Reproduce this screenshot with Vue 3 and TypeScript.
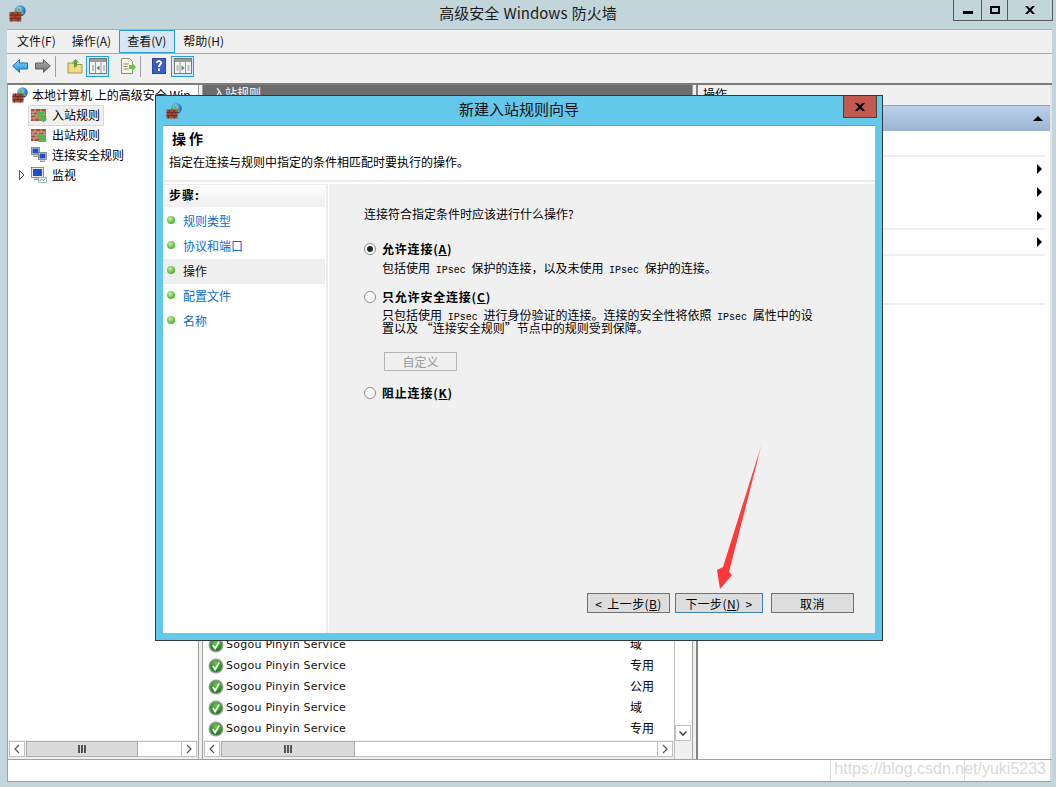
<template>
  <main class="desktop">
    <header class="titlebar">
      <svg class="app-icon" viewBox="0 0 16 16"><use href="#fw" /></svg>
      <span class="title-text">高级安全 Windows 防火墙</span>
      <div class="win-buttons">
        <span class="wb wb-min"><i></i></span>
        <span class="wb wb-max"><i></i></span>
        <span class="wb wb-close">
          <svg viewBox="0 0 10 8" width="10" height="8"><path d="M0 0h2.600l2.400 2.400L7.400 0H10L6.400 4 10 8H7.400L5 5.600 2.600 8H0l3.600-4z" fill="#000" /></svg>
        </span>
      </div>
    </header>

    <svg class="defs" width="0" height="0">
      <defs>
        <radialGradient id="globe" cx="0.4" cy="0.35" r="0.7">
          <stop offset="0" stop-color="#bfe6ff" />
          <stop offset="0.6" stop-color="#2f7fd8" />
          <stop offset="1" stop-color="#1b4fa0" />
        </radialGradient>
        <radialGradient id="okball" cx="0.5" cy="0.3" r="0.75">
          <stop offset="0" stop-color="#66cc44" />
          <stop offset="1" stop-color="#127012" />
        </radialGradient>
        <linearGradient id="blueArrow" x1="0" y1="0" x2="0" y2="1">
          <stop offset="0" stop-color="#8fd4fb" />
          <stop offset="1" stop-color="#1f8fe0" />
        </linearGradient>
        <linearGradient id="greyArrow" x1="0" y1="0" x2="0" y2="1">
          <stop offset="0" stop-color="#b0b0b0" />
          <stop offset="1" stop-color="#6f6f6f" />
        </linearGradient>
        <g id="fw">
          <circle cx="10.500" cy="5.500" r="5.200" fill="url(#globe)" />
          <path d="M8 2.500l3 1-1 2.500-2-.5zM11 7l2.500-.5.500 2-2 .5z" fill="#5bbf3c" />
          <rect x=".5" y="6.500" width="11" height="9" fill="#a24a36" />
          <path d="M.5 9.500h11M.5 12.500h11M3.500 6.500v3M8 6.500v3M6 9.500v3M2.500 12.500v3M8.500 12.500v3" stroke="#6d2d20" fill="none" />
        </g>
        <g id="brick">
          <rect y="2" width="15" height="12" fill="#a8503c" />
          <path d="M0 5h15M0 8h15M0 11h15M4 2v3M10 2v3M2 5v3M7 5v3M13 5v3M5 8v3M11 8v3M3 11v3M9 11v3" stroke="#dcc0b4" stroke-width=".8" fill="none" />
        </g>
        <g id="screen">
          <rect x=".5" y=".5" width="8" height="7" fill="#e8e8e8" stroke="#666" stroke-width=".7" />
          <rect x="1.500" y="1.500" width="6" height="5" fill="#1f4fc8" />
          <path d="M2 8.500h5v1.500H2z" fill="#999" />
        </g>
      </defs>
    </svg>

    <div class="client">
      <nav class="menubar">
        <span v-for="m in menus" :key="m" class="menu-item" :class="{ active: m === '查看(V)' }">{{ m }}</span>
      </nav>

      <div class="toolbar">
        <svg class="tb-arrow" viewBox="0 0 16 14"><path d="M.7 7L7.500.7V4H15.500v6H7.500v3.300z" fill="url(#blueArrow)" stroke="#1c6fb8" /></svg>
        <svg class="tb-arrow tb-arrow2" viewBox="0 0 16 14"><path d="M15.300 7L8.500.7V4H.5v6h8v3.300z" fill="url(#greyArrow)" stroke="#5e5e5e" /></svg>
        <span class="tb-sep"></span>
        <svg class="tb-icon" viewBox="0 0 16 16">
          <path d="M1 5h5l1 1.500h8V15H1z" fill="#f1dc8c" stroke="#a89150" />
          <path d="M7 10V4.500H5L8.500 1 12 4.500h-2V8z" fill="#58a53a" />
        </svg>
        <span class="tb-toggle">
          <svg viewBox="0 0 18 16" width="18" height="16">
            <rect x=".5" y=".5" width="17" height="15" fill="#f5f5f5" stroke="#777" />
            <path d="M1 1h16v3H1z" fill="#9a9a9a" />
            <path d="M6.500 4v11M12 4v11" stroke="#999" />
            <path d="M3 8h2M3 10h2M3 12h2M14 8h2M14 10h2M14 12h2" stroke="#888" />
            <path d="M10.500 7.500v5L7.500 10z" fill="#33a04a" />
          </svg>
        </span>
        <svg class="tb-icon tb-export" viewBox="0 0 16 16">
          <path d="M1.500.5h8l3 3V15.500h-11z" fill="#f6f3df" stroke="#8d8d8d" />
          <path d="M3.500 6h5M3.500 8.500h4M3.500 11h5" stroke="#8a8a6a" />
          <path d="M9 7h3V4.500L16 9l-4 4.500V11H9z" fill="#6cc24a" />
        </svg>
        <span class="tb-sep tb-sep2"></span>
        <svg class="tb-help" viewBox="0 0 14 16">
          <rect width="14" height="16" fill="#2c46a8" />
          <rect x="1" y="1" width="12" height="14" fill="#3c5cc4" />
          <path d="M4 5c0-2 1.500-3 3-3s3 1 3 3c0 1.800-2 2-2 4H6c0-2.500 2-2.800 2-4 0-.6-.4-1-1-1s-1 .4-1 1zM6 10.500h2V13H6z" fill="#fff" />
        </svg>
        <span class="tb-toggle tb-toggle2">
          <svg viewBox="0 0 18 16" width="18" height="16">
            <rect x=".5" y=".5" width="17" height="15" fill="#f5f5f5" stroke="#777" />
            <path d="M1 1h16v3H1z" fill="#9a9a9a" />
            <path d="M6 4v11M11.500 4v11" stroke="#999" />
            <path d="M2.500 8h2M2.500 10h2M2.500 12h2M13.500 8h2M13.500 10h2M13.500 12h2" stroke="#888" />
            <path d="M7.500 7.500v5l3-2.500z" fill="#33a04a" />
          </svg>
        </span>
      </div>

      <div class="panes">
        <aside class="tree">
          <div class="tree-body">
            <div class="tree-root">
              <svg class="t-icon" viewBox="0 0 16 16"><use href="#fw" /></svg>
              <span class="t-label">本地计算机 上的高级安全 Win</span>
            </div>
            <div v-for="(n, i) in treeNodes" :key="n" class="tree-node">
              <span class="twisty">
                <svg v-if="i === 3" viewBox="0 0 6 10" width="6" height="10"><path d="M.5.5L5 5 .5 9.500z" fill="#fff" stroke="#555" /></svg>
              </span>
              <span class="node-inner" :class="{ selected: i === 0 }">
                <svg class="t-icon" viewBox="0 0 16 16">
                  <template v-if="i === 0">
                    <use href="#brick" />
                    <path d="M6 5h8l-2.500 2.500L16 12l-3.500 3.500L8 11l-2 2z" fill="#55b84a" />
                  </template>
                  <template v-else-if="i === 1">
                    <use href="#brick" />
                    <path d="M15 15H7l2.500-2.500L6 9l3-3 3.500 3.500L15 7z" fill="#55b84a" />
                  </template>
                  <template v-else-if="i === 2">
                    <use href="#screen" />
                    <g transform="translate(7 5)"><use href="#screen" /></g>
                  </template>
                  <template v-else>
                    <rect x=".5" y=".5" width="12" height="10" fill="#e8e8e8" stroke="#666" stroke-width=".7" />
                    <rect x="2" y="2" width="9" height="7" fill="#1f4fc8" />
                    <path d="M3 11.500h7V13H3z" fill="#999" />
                    <rect x="7.500" y="10.500" width="8" height="5" fill="#fff" stroke="#7fa0b0" stroke-width=".7" />
                    <path d="M8.500 14l2-2 1.500 1.500 2.500-2" stroke="#3fa63f" fill="none" />
                  </template>
                </svg>
                <span class="t-label">{{ n }}</span>
              </span>
            </div>
          </div>
          <div class="hscroll">
            <span class="sb-btn"><svg viewBox="0 0 6 10" width="6" height="10"><path d="M5 1L1 5l4 4" stroke="#555" stroke-width="1.200" fill="none" /></svg></span>
            <span class="sb-thumb sb-thumb-a"><b></b></span>
            <span class="sb-track"></span>
            <span class="sb-btn"><svg viewBox="0 0 6 10" width="6" height="10"><path d="M1 1l4 4-4 4" stroke="#555" stroke-width="1.200" fill="none" /></svg></span>
          </div>
        </aside>

        <section class="center">
          <div class="pane-title">入站规则</div>
          <div class="center-main">
            <div class="list-wrap">
              <div class="rows">
                <div v-for="(p, i) in rows" :key="i" class="row">
                  <svg class="ok" viewBox="0 0 16 16">
                    <circle cx="8" cy="8" r="7.500" fill="#9a9a9a" />
                    <circle cx="8" cy="8" r="6" fill="url(#okball)" />
                    <path d="M4.800 8l2.300 3.500L11.200 4.500" stroke="#fff" stroke-width="1.800" fill="none" />
                  </svg>
                  <span class="svc">Sogou Pinyin Service</span>
                  <span class="profile">{{ p }}</span>
                </div>
              </div>
              <div class="hscroll">
                <span class="sb-btn"><svg viewBox="0 0 6 10" width="6" height="10"><path d="M5 1L1 5l4 4" stroke="#555" stroke-width="1.200" fill="none" /></svg></span>
                <span class="sb-thumb sb-thumb-b"><b></b></span>
                <span class="sb-track"></span>
                <span class="sb-btn"><svg viewBox="0 0 6 10" width="6" height="10"><path d="M1 1l4 4-4 4" stroke="#555" stroke-width="1.200" fill="none" /></svg></span>
              </div>
            </div>
            <div class="vscroll">
              <span class="v-track"></span>
              <span class="sb-btn v-btn">
                <svg viewBox="0 0 8 5" width="8" height="5"><path d="M.5 .5L4 4 7.500 .5" stroke="#333" stroke-width="1.300" fill="none" /></svg>
              </span>
              <span class="corner"></span>
            </div>
          </div>
        </section>

        <aside class="actions">
          <div class="pane-title pane-title-light">操作</div>
          <div class="act-head"><span class="tri-up"></span></div>
          <div class="act-rows">
            <div class="act-row act-line"></div>
            <div class="act-row act-short"><span class="tri-right"></span></div>
            <div class="act-row"><span class="tri-right"></span></div>
            <div class="act-row act-line"><span class="tri-right"></span></div>
            <div class="act-row act-line"><span class="tri-right"></span></div>
            <div class="act-row act-tall act-line"></div>
          </div>
        </aside>
      </div>

      <footer class="statusbar">
        <span class="status-main"></span>
        <span class="status-cell"></span>
        <span class="status-end"></span>
      </footer>
    </div>

    <section class="dialog">
      <header class="dlg-title">
        <svg class="dlg-icon" viewBox="0 0 16 16"><use href="#fw" /></svg>
        <span class="dlg-title-text">新建入站规则向导</span>
        <span class="dlg-close">
          <svg viewBox="0 0 10 8" width="10" height="8"><path d="M0 0h2.600l2.400 2.400L7.400 0H10L6.400 4 10 8H7.400L5 5.600 2.600 8H0l3.600-4z" fill="#000" /></svg>
        </span>
      </header>
      <div class="dlg-body">
        <div class="dlg-head">
          <h2>操作</h2>
          <p>指定在连接与规则中指定的条件相匹配时要执行的操作。</p>
        </div>
        <div class="dlg-main">
          <nav class="steps">
            <div class="steps-title">步骤:</div>
            <div v-for="s in steps" :key="s" class="step" :class="{ current: s === '操作' }">
              <span class="dot"></span>
              <span class="step-label">{{ s }}</span>
            </div>
          </nav>
          <div class="content">
            <p class="question">连接符合指定条件时应该进行什么操作?</p>
            <div class="opt">
              <span class="radio on"></span>
              <div>
                <div class="opt-label">允许连接(<u>A</u>)</div>
                <div class="opt-desc">包括使用 <span class="latin">IPsec</span> 保护的连接，以及未使用 <span class="latin">IPsec</span> 保护的连接。</div>
              </div>
            </div>
            <div class="opt opt2">
              <span class="radio"></span>
              <div>
                <div class="opt-label">只允许安全连接(<u>C</u>)</div>
                <div class="opt-desc line1">只包括使用 <span class="latin">IPsec</span> 进行身份验证的连接。连接的安全性将依照 <span class="latin">IPsec</span> 属性中的设</div>
                <div class="opt-desc line2">置以及 “连接安全规则”节点中的规则受到保障。</div>
                <button class="custom" type="button" disabled>自定义</button>
              </div>
            </div>
            <div class="opt opt3">
              <span class="radio"></span>
              <div class="opt-label">阻止连接(<u>K</u>)</div>
            </div>
            <div class="dlg-buttons">
              <button class="btn btn-back" type="button">&lt; 上一步(<u>B</u>)</button>
              <button class="btn btn-next" type="button">下一步(<u>N</u>) &gt;</button>
              <button class="btn btn-cancel" type="button">取消</button>
            </div>
          </div>
        </div>
      </div>
    </section>

    <svg class="red-arrow" viewBox="0 0 60 170" width="60" height="170">
      <defs>
        <linearGradient id="fade" x1="1" y1="0" x2="0" y2="1">
          <stop offset="0" stop-color="#ffd0d0" />
          <stop offset="0.12" stop-color="#ff4040" />
          <stop offset="1" stop-color="#ff3636" />
        </linearGradient>
      </defs>
      <path d="M47 0L14 129 17 132 5 146 2 127 8 124z" fill="url(#fade)" />
    </svg>

    <div class="watermark">https://blog.csdn.net/yuki5233</div>
  </main>
</template>

<script setup lang="ts">
const menus: string[] = ["文件(F)", "操作(A)", "查看(V)", "帮助(H)"];
const treeNodes: string[] = ["入站规则", "出站规则", "连接安全规则", "监视"];
const steps: string[] = ["规则类型", "协议和端口", "操作", "配置文件", "名称"];
const rows: string[] = ["域", "专用", "公用", "域", "专用"];
</script>

<style>
html,
body {
  margin: 0;
  background: #c2d5db;
}
</style>

<style scoped>
.desktop {
  position: relative;
  width: 1056px;
  height: 787px;
  overflow: hidden;
  display: flex;
  flex-direction: column;
  background: #c2d5db;
  color: #000;
  font-family: "Noto Sans CJK SC", "Liberation Sans", sans-serif;
  font-size: 12px;
}

.defs {
  position: absolute;
}

.titlebar {
  position: relative;
  height: 29px;
  flex: none;
  display: flex;
  align-items: center;
  justify-content: center;
}

.app-icon {
  position: absolute;
  left: 9px;
  top: 5px;
  width: 17px;
  height: 17px;
}

.title-text {
  font-size: 15px;
  word-spacing: 1px;
  margin-top: -4px;
  color: #1a1a1a;
}

.win-buttons {
  position: absolute;
  right: 3px;
  top: 0;
  height: 20px;
  display: flex;
  border: 1px solid #55595c;
  border-top: 0;
}

.wb {
  display: flex;
  align-items: center;
  justify-content: center;
  height: 20px;
  border-left: 1px solid #55595c;
}

.wb-min {
  width: 27px;
  border-left: 0;
}

.wb-min i {
  display: block;
  width: 10px;
  height: 3px;
  background: #000;
  margin-top: 5px;
}

.wb-max {
  width: 25px;
}

.wb-max i {
  display: block;
  width: 6px;
  height: 4px;
  border: 2px solid #000;
}

.wb-close {
  width: 44px;
}

.client {
  flex: 1;
  min-height: 0;
  margin: 0 4px 5px 7px;
  display: flex;
  flex-direction: column;
  background: #f0f0f0;
  border-top: 1px solid #a6b4ba;
}

.menubar {
  height: 23px;
  flex: none;
  display: flex;
  align-items: stretch;
  border-bottom: 1px solid #a9a9b4;
  padding-left: 2px;
}

.menu-item {
  padding: 0 7px;
  line-height: 19px;
  border: 1px solid transparent;
  color: #111;
}

.menu-item.active {
  background: #d5e7f8;
  border-color: #26a0da;
  padding-right: 8px;
}

.toolbar {
  height: 29px;
  flex: none;
  box-sizing: border-box;
  display: flex;
  align-items: center;
  padding: 0 0 5px 5px;
}

.tb-arrow {
  width: 16px;
  height: 14px;
  margin-right: 2px;
}

.tb-arrow2 {
  margin-left: 5px;
}

.tb-sep {
  width: 1px;
  height: 21px;
  background: #a0a0a0;
  margin: 0 11px 0 2px;
}

.tb-icon {
  width: 16px;
  height: 16px;
}

.tb-toggle {
  width: 21px;
  height: 19px;
  margin-left: 3px;
  display: flex;
  align-items: center;
  justify-content: center;
  background: #d5e7f8;
  border: 1px solid #26a0da;
}

.tb-export {
  margin-left: 11px;
}

.tb-sep2 {
  margin: 0 11px 0 4px;
}

.tb-help {
  width: 14px;
  height: 16px;
}

.tb-toggle2 {
  margin-left: 5px;
}

.panes {
  flex: 1;
  min-height: 0;
  display: flex;
  border-top: 2px solid #7c7c7c;
  border-bottom: 1px solid #a0a0a0;
  border-left: 1px solid #a0a0a0;
}

.tree {
  width: 191px;
  flex: none;
  box-sizing: border-box;
  display: flex;
  flex-direction: column;
  background: #fff;
  border-right: 1px solid #a0a0a0;
}

.tree-body {
  flex: 1;
  min-height: 0;
  overflow: hidden;
}

.tree-root {
  display: flex;
  align-items: center;
  height: 20px;
  padding-left: 4px;
  gap: 4px;
  white-space: nowrap;
}

.t-label {
  margin-top: -2px;
}

.tree-node {
  display: flex;
  align-items: center;
  height: 20px;
  padding-left: 7px;
}

.twisty {
  width: 13px;
  height: 10px;
  padding-left: 4px;
  box-sizing: border-box;
  flex: none;
  display: flex;
  align-items: center;
}

.twisty svg {
  flex: none;
}

.node-inner {
  display: flex;
  align-items: center;
  gap: 5px;
  height: 19px;
  padding: 0 3px 0 2px;
  margin-left: 1px;
}

.node-inner.selected {
  background: #f0f0f0;
  outline: 1px solid #d9d9d9;
}

.t-icon {
  width: 16px;
  height: 16px;
  flex: none;
}

.hscroll {
  height: 16px;
  flex: none;
  display: flex;
  align-items: stretch;
  padding: 1px 1px 2px;
  background: #f0f0f0;
}

.sb-btn {
  width: 16px;
  flex: none;
  display: flex;
  align-items: center;
  justify-content: center;
  background: #fff;
  border: 1px solid #c0c0c0;
  box-sizing: border-box;
}

.sb-thumb {
  display: flex;
  align-items: center;
  justify-content: center;
  margin-left: 1px;
  background: #dadada;
  border: 1px solid #acacac;
  box-sizing: border-box;
}

.sb-thumb b {
  display: block;
  width: 8px;
  height: 8px;
  background: repeating-linear-gradient(90deg, #555 0 2px, transparent 2px 3px);
}

.sb-thumb-a {
  width: 112px;
}

.sb-thumb-b {
  width: 134px;
}

.sb-track {
  flex: 1;
  background: #fff;
  border-top: 1px solid #c0c0c0;
  border-bottom: 1px solid #c0c0c0;
}

.center {
  width: 491px;
  margin: 0 3px;
  flex: none;
  display: flex;
  flex-direction: column;
  background: #fff;
  border-left: 1px solid #a0a0a0;
  border-right: 1px solid #a0a0a0;
  box-sizing: border-box;
}

.pane-title {
  height: 18px;
  flex: none;
  background: #6d6d6d;
  color: #fff;
  padding-left: 10px;
  line-height: 16px;
  font-size: 12px;
}

.pane-title-light {
  background: #f0f0f0;
  color: #000;
  height: 20px;
  line-height: 18px;
  padding-left: 5px;
  border-bottom: 1px solid #a0a0a0;
}

.center-main {
  flex: 1;
  min-height: 0;
  display: flex;
}

.list-wrap {
  flex: 1;
  min-width: 0;
  display: flex;
  flex-direction: column;
  justify-content: flex-end;
}

.rows {
  flex: none;
  padding: 0 0 1px 5px;
}

.row {
  height: 21px;
  display: flex;
  align-items: center;
  gap: 2px;
}

.ok {
  width: 16px;
  height: 16px;
  flex: none;
}

.svc {
  font-family: "DejaVu Sans", sans-serif;
  font-size: 11px;
  letter-spacing: 0.25px;
  width: 402px;
  flex: none;
  color: #111;
}

.profile {
  font-size: 12px;
  margin-top: -2px;
}

.vscroll {
  width: 18px;
  flex: none;
  box-sizing: border-box;
  display: flex;
  flex-direction: column;
  background: #fff;
  border-left: 1px solid #c0c0c0;
}

.v-track {
  flex: 1;
}

.v-btn {
  width: 16px;
  height: 16px;
  flex: none;
}

.corner {
  height: 18px;
  flex: none;
  background: #f0f0f0;
}

.actions {
  flex: 1;
  min-width: 0;
  display: flex;
  flex-direction: column;
  background: #fff;
  border-left: 2px solid #828282;
  border-right: 2px solid #e4e4e4;
}

.act-head {
  height: 25px;
  flex: none;
  display: flex;
  align-items: center;
  justify-content: flex-end;
  padding-right: 7px;
  background: linear-gradient(#bad0e9, #9bb5d3);
}

.tri-up {
  display: block;
  width: 0;
  height: 0;
  border-left: 5px solid transparent;
  border-right: 5px solid transparent;
  border-bottom: 5px solid #000;
}

.act-rows {
  padding: 0 5px;
}

.act-row {
  height: 24px;
  display: flex;
  align-items: center;
  justify-content: flex-end;
  padding-right: 3px;
}

.act-short {
  height: 23px;
}

.act-tall {
  height: 47px;
}

.act-line {
  border-bottom: 2px solid #eee;
}

.tri-right {
  display: block;
  width: 0;
  height: 0;
  border-top: 5px solid transparent;
  border-bottom: 5px solid transparent;
  border-left: 5px solid #000;
}

.statusbar {
  height: 21px;
  flex: none;
  display: flex;
  background: #fff;
  border-bottom: 1px solid #a0a0a0;
  border-left: 1px solid #a0a0a0;
  border-right: 2px solid #d8d8d8;
}

.status-main {
  flex: 1;
}

.status-cell {
  width: 133px;
  border-left: 1px solid #ddd;
}

.status-end {
  width: 85px;
  border-left: 1px solid #ddd;
}

/* dialog floats over the main window */
.dialog {
  position: absolute;
  left: 155px;
  top: 95px;
  width: 728px;
  height: 546px;
  box-sizing: border-box;
  background: #64c8ea;
  border: 1px solid #2f3a40;
  display: flex;
  flex-direction: column;
  padding: 0 7px 7px;
}

.dlg-title {
  position: relative;
  height: 29px;
  flex: none;
  display: flex;
  align-items: center;
  justify-content: center;
}

.dlg-icon {
  position: absolute;
  left: 3px;
  top: 7px;
  width: 16px;
  height: 16px;
}

.dlg-title-text {
  font-size: 15px;
  color: #111;
  margin-top: -4px;
}

.dlg-close {
  position: absolute;
  right: -2px;
  top: 0;
  width: 34px;
  height: 22px;
  display: flex;
  align-items: center;
  justify-content: center;
  background: #c25a4f;
  border: 1px solid #4a4440;
  border-top: 0;
  box-sizing: border-box;
}

.dlg-body {
  flex: 1;
  min-height: 0;
  display: flex;
  flex-direction: column;
  background: #fff;
  border-top: 1px solid #5aa7c2;
}

.dlg-head {
  height: 56px;
  flex: none;
  padding: 3px 8px 0;
  box-sizing: border-box;
  border-bottom: 2px solid #ececec;
}

.dlg-head h2 {
  margin: 0 0 0 1px;
  font-size: 14px;
  font-weight: 700;
  line-height: 18px;
  letter-spacing: 3px;
}

.dlg-head p {
  margin: 6px 0 0 -2px;
  font-size: 12px;
  line-height: 18px;
}

.dlg-main {
  flex: 1;
  min-height: 0;
  display: flex;
  padding-top: 2px;
}

.steps {
  width: 165px;
  flex: none;
  box-sizing: border-box;
  border-right: 2px solid #ececec;
  border-top: 1px solid #ececec;
  padding-right: 1px;
}

.steps-title {
  height: 22px;
  line-height: 20px;
  padding-left: 6px;
  font-weight: 700;
  letter-spacing: 1px;
  background: linear-gradient(#fff, #efefef);
  margin-bottom: 2px;
}

.step {
  height: 25px;
  display: flex;
  align-items: center;
  gap: 8px;
  padding-left: 4px;
  color: #0a6ccc;
}

.step-label {
  margin-top: -2px;
}

.step.current {
  background: #efefef;
  color: #111;
}

.dot {
  width: 8px;
  height: 8px;
  border-radius: 50%;
  background: radial-gradient(circle at 40% 35%, #c4f2a0, #4eb42e 70%);
  flex: none;
  margin-top: -3px;
}

.content {
  flex: 1;
  min-width: 0;
  background: #f0f0f0;
  padding: 21px 0 0 35px;
  display: flex;
  flex-direction: column;
  margin-left: 1px;
}

.question {
  margin: 0;
  line-height: 18px;
}

.opt {
  display: flex;
  gap: 6px;
  margin-top: 17px;
}

.opt2 {
  margin-top: 12px;
}

.opt3 {
  margin-top: 13px;
}

.radio {
  width: 10px;
  height: 10px;
  flex: none;
  border: 1px solid #8a8a8a;
  border-radius: 50%;
  background: #fff;
  position: relative;
  margin-top: 3px;
}

.radio.on::after {
  content: "";
  position: absolute;
  inset: 2px;
  border-radius: 50%;
  background: #222;
}

.opt-label {
  font-weight: 700;
  line-height: 18px;
  font-size: 12px;
  letter-spacing: 0.8px;
}

.opt-desc {
  height: 17px;
  line-height: 17px;
  white-space: nowrap;
  margin-top: 1px;
  word-spacing: 3px;
}

.opt-desc.line1 {
  height: 13px;
  line-height: 13px;
  margin-top: 2px;
}

.opt-desc.line2 {
  height: 13px;
  line-height: 13px;
  margin-top: 0;
  word-spacing: 0;
}

.latin {
  font-family: "Liberation Mono", monospace;
  font-size: 10px;
}

.custom {
  display: block;
  width: 73px;
  height: 19px;
  margin: 18px 0 0 2px;
  padding: 0;
  background: #f0f0f0;
  border: 1px solid #b5b5b5;
  color: #9a9a9a;
  font: 12px/15px "Noto Sans CJK SC", sans-serif;
}

.dlg-buttons {
  margin-top: auto;
  margin-bottom: 20px;
  margin-right: 21px;
  display: flex;
  justify-content: flex-end;
}

.btn {
  height: 20px;
  padding: 0;
  background: #dddddd;
  border: 1px solid #707070;
  font: 12px "Noto Sans CJK SC", sans-serif;
  letter-spacing: 0.4px;
  word-spacing: 2px;
  color: #000;
}

.btn-back {
  width: 83px;
}

.btn-next {
  width: 88px;
  margin-left: 5px;
  border-color: #3c7fb1;
}

.btn-cancel {
  width: 83px;
  margin-left: 8px;
}

.red-arrow {
  position: absolute;
  left: 715px;
  top: 443px;
}

.watermark {
  position: absolute;
  right: 10px;
  top: 760px;
  font-family: "Liberation Sans", sans-serif;
  font-size: 16px;
  line-height: 18px;
  color: rgb(190 190 190 / 60%);
  white-space: nowrap;
}
</style>
